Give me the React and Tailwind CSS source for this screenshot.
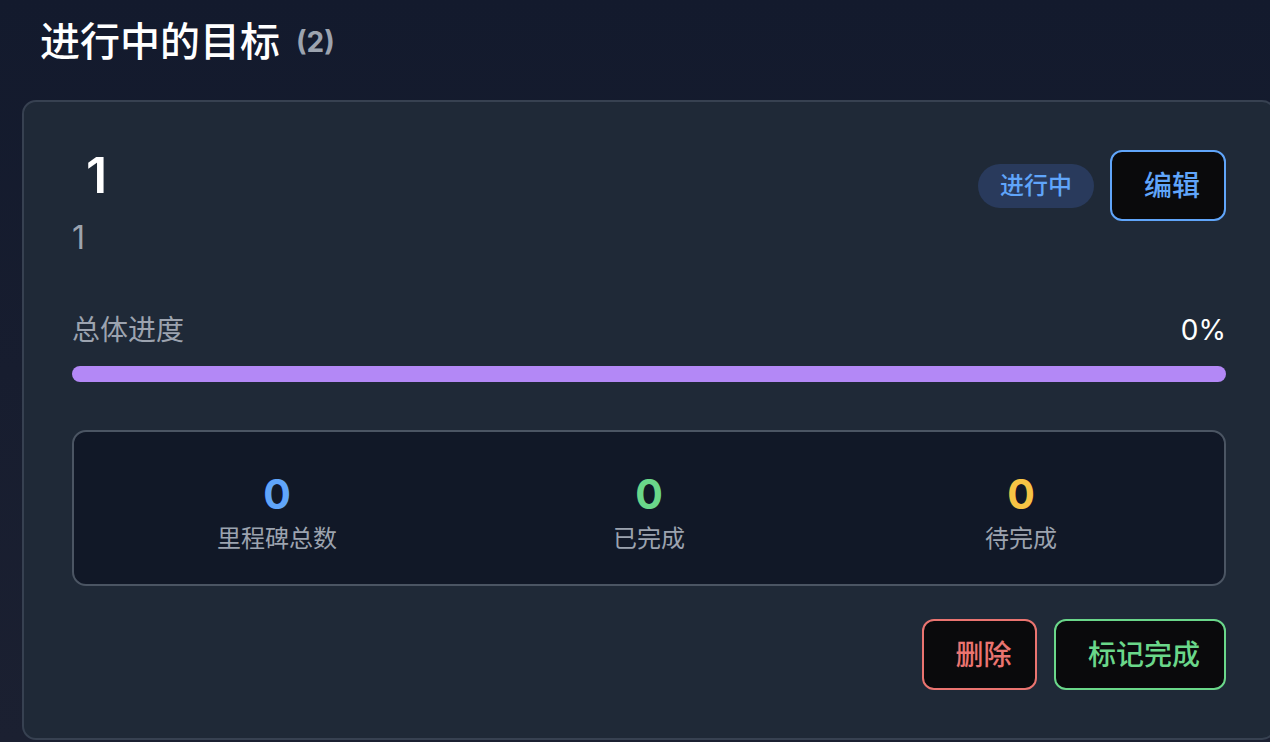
import React from "react";

const font = { fontFamily: '"Inter", "Noto Sans CJK SC", sans-serif' };

function Stat({ value, label, color }) {
  return (
    <div className="flex flex-col items-center">
      <div className={`h-[44px] leading-[44px] text-[41px] font-bold ${color}`}>{value}</div>
      <div className="mt-[5px] h-[36px] leading-[36px] text-[24px] text-[#9ca3af]">{label}</div>
    </div>
  );
}

export default function App() {
  return (
    <div
      className="w-full h-[742px] overflow-hidden bg-gradient-to-b from-[#131a2d] to-[#1b2031]"
      style={font}
    >
      <div className="h-[100px] pl-[40px] pb-[16px] flex items-center">
        <h1 className="text-[40px] leading-[48px] font-medium text-white">进行中的目标</h1>
        <span className="ml-[16px] text-[28px] font-bold text-[#9ca3af]">(2)</span>
      </div>

      <div className="ml-[22px] w-[1254px] border-2 border-[#374151] rounded-[14px] bg-[#1f2937] px-[48px] pt-[48px] pb-[48px]">
        <div className="flex justify-between items-start">
          <div>
            <div className="h-[50px] leading-[50px] pl-[14px] text-[50px] font-semibold text-white">1</div>
            <div className="mt-[18px] h-[40px] leading-[40px] text-[32px] text-[#9ca3af]">1</div>
          </div>
          <div className="flex items-center gap-[16px]">
            <span className="h-[44px] px-[22px] flex items-center rounded-full bg-[#293a5c] text-[24px] font-medium text-[#60a5fa]">
              进行中
            </span>
            <button className="w-[116px] h-[71px] pl-[8px] flex items-center justify-center border-2 border-[#60a5fa] rounded-[12px] bg-[#0a0a0c] text-[28px] font-medium text-[#60a5fa]">
              编辑
            </button>
          </div>
        </div>

        <div className="mt-[52px] h-[40px] flex items-center justify-between text-[28px]">
          <span className="text-[#9ca3af]">总体进度</span>
          <span className="text-white">0%</span>
        </div>
        <div className="mt-[16px] h-[16px] rounded-full bg-[#b388f6]" />

        <div className="mt-[48px] h-[156px] border-2 border-[#4b5563] rounded-[14px] bg-[#111827] px-[17px] pt-[40px] grid grid-cols-3">
          <Stat value="0" label="里程碑总数" color="text-[#60a5fa]" />
          <Stat value="0" label="已完成" color="text-[#6ad78a]" />
          <Stat value="0" label="待完成" color="text-[#f6c445]" />
        </div>

        <div className="mt-[33px] flex justify-end gap-[17px]">
          <button className="w-[115px] h-[71px] pl-[8px] flex items-center justify-center border-2 border-[#ea7470] rounded-[12px] bg-[#0a0a0c] text-[28px] font-medium text-[#ea7470]">
            删除
          </button>
          <button className="w-[172px] h-[71px] pl-[8px] flex items-center justify-center border-2 border-[#6ad78a] rounded-[12px] bg-[#0a0a0c] text-[28px] font-medium text-[#6ad78a]">
            标记完成
          </button>
        </div>
      </div>
    </div>
  );
}
